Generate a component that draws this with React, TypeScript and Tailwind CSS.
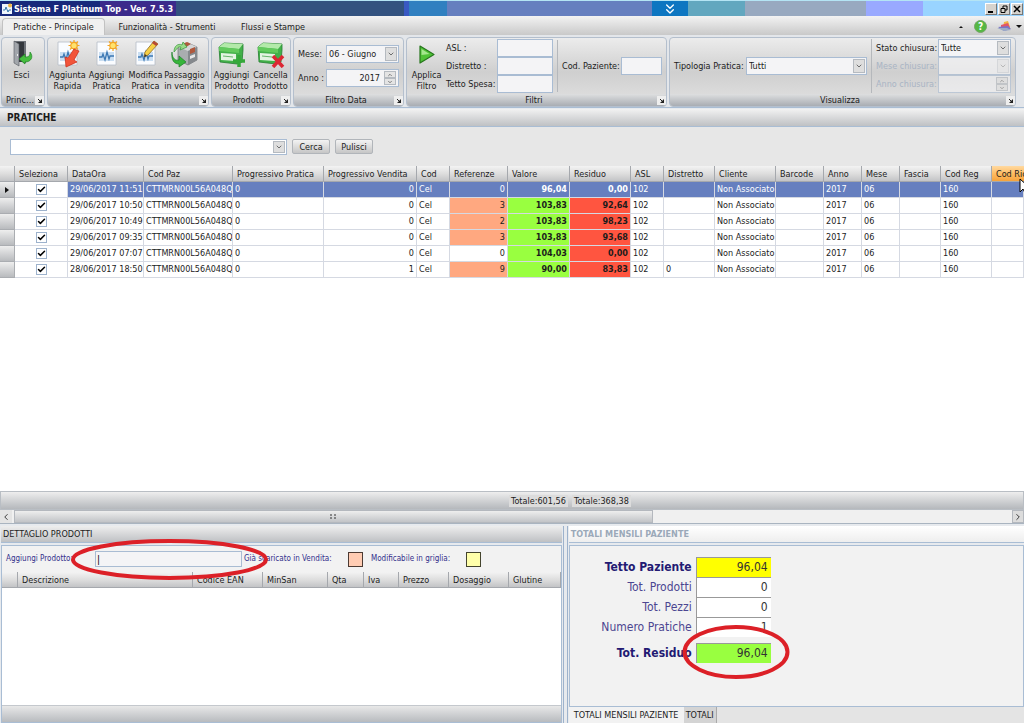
import type { ReactNode } from 'react'
import { ChevronDown, ChevronLeft, ChevronRight, ChevronUp, ChevronsDown, Check } from 'lucide-react'
import clsx from 'clsx'

interface Practice {
  date: string
  sales: string
  refs: string
  value: string
  residual: string
  district: string
}

const PRACTICES: Practice[] = [
  { date: '29/06/2017 11:51', sales: '0', refs: '0', value: '96,04', residual: '0,00', district: '' },
  { date: '29/06/2017 10:50', sales: '0', refs: '3', value: '103,83', residual: '92,64', district: '' },
  { date: '29/06/2017 10:49', sales: '0', refs: '2', value: '103,83', residual: '98,23', district: '' },
  { date: '29/06/2017 09:35', sales: '0', refs: '3', value: '103,83', residual: '93,68', district: '' },
  { date: '29/06/2017 07:07', sales: '0', refs: '0', value: '104,03', residual: '0,00', district: '' },
  { date: '28/06/2017 18:50', sales: '1', refs: '9', value: '90,00', residual: '83,83', district: '0' },
]

const COLUMNS = [
  { title: '', width: 'w-[15px]' },
  { title: 'Seleziona', width: 'w-[53px]' },
  { title: 'DataOra', width: 'w-[76px]' },
  { title: 'Cod Paz', width: 'w-[89px]' },
  { title: 'Progressivo Pratica', width: 'w-[91px]' },
  { title: 'Progressivo Vendita', width: 'w-[93px]' },
  { title: 'Cod', width: 'w-[33px]' },
  { title: 'Referenze', width: 'w-[58px]' },
  { title: 'Valore', width: 'w-[62px]' },
  { title: 'Residuo', width: 'w-[61px]' },
  { title: 'ASL', width: 'w-[33px]' },
  { title: 'Distretto', width: 'w-[51px]' },
  { title: 'Cliente', width: 'w-[61px]' },
  { title: 'Barcode', width: 'w-[48px]' },
  { title: 'Anno', width: 'w-[38px]' },
  { title: 'Mese', width: 'w-[38px]' },
  { title: 'Fascia', width: 'w-[41px]' },
  { title: 'Cod Reg', width: 'w-[51px]' },
  { title: 'Cod Ric', width: 'w-auto' },
]

const PRODUCT_COLUMNS = [
  { title: '', width: 'w-[16px]' },
  { title: 'Descrizione', width: 'w-[175px]' },
  { title: 'Codice EAN', width: 'w-[70px]' },
  { title: 'MinSan', width: 'w-[65px]' },
  { title: 'Qta', width: 'w-[36px]' },
  { title: 'Iva', width: 'w-[35px]' },
  { title: 'Prezzo', width: 'w-[50px]' },
  { title: 'Dosaggio', width: 'w-[60px]' },
  { title: 'Glutine', width: 'w-auto' },
]

const TOTALS = [
  { label: 'Tetto Paziente', value: '96,04', strong: true, color: 'bg-[#ffff00]' },
  { label: 'Tot. Prodotti', value: '0', strong: false, color: 'bg-white' },
  { label: 'Tot. Pezzi', value: '0', strong: false, color: 'bg-white' },
  { label: 'Numero Pratiche', value: '1', strong: false, color: 'bg-white' },
]

const FIELD = 'border border-[#a9bcd3] bg-[#f4f4f6] outline-none'
const HEADER_CELL =
  'h-4 overflow-hidden border-r border-b border-[#a5a8ad] bg-linear-to-b from-[#f3f3f3] via-[#dedede] to-[#c3c4c6] pr-0 pl-1 text-left font-normal whitespace-nowrap'

function DoorIcon() {
  return (
    <svg viewBox="0 0 26 28" className="h-7 w-[26px]" aria-hidden="true">
      <path d="M5 1h12v22h-3V3H7v20H5z" fill="#6d7177" />
      <path d="M7 2h8v20H7z" fill="#33373c" />
      <path d="M5 1l5 3v22l-5-3z" fill="#a2a6ab" stroke="#55595e" strokeWidth=".6" />
      <path d="M8.500 14v2" stroke="#eee" />
      <path d="M10 19l6-5v3c4 0 5-1 5-5 4 5 1 10-5 10v2z" fill="#45bd3e" stroke="#218326" strokeWidth=".7" />
    </svg>
  )
}

type SheetMark = 'quick' | 'new' | 'edit'

function SheetIcon({ mark }: { mark: SheetMark }) {
  return (
    <svg viewBox="0 0 26 28" className="h-7 w-[26px]" aria-hidden="true">
      <path d="M3 2h19v23H3z" fill="#fafcff" stroke="#b5bcc6" strokeWidth=".8" />
      <path d="M5 12h15v9H5z" fill="#c9def2" />
      <path d="M5 17h3l1-3 2 6 2-8 2 7 1-3h4" fill="none" stroke="#3c78b4" strokeWidth="1.3" />
      {mark !== 'edit' && (
        <g stroke="#f3a526" strokeWidth="1.2">
          <path d="M19 0v11M13.500 5.500h11M15 1.500l8 8M23 1.500l-8 8" />
          <circle cx="19" cy="5.500" r="3.200" fill="#ffe36c" />
        </g>
      )}
      {mark === 'quick' && (
        <path d="M19 9l5 2-5 9 3 2-11 5-1-10 3 1z" fill="#f2543a" stroke="#c92d18" strokeWidth=".7" />
      )}
      {mark === 'edit' && (
        <g>
          <path d="M21 1l4 3-10 11-4 2 1-5z" fill="#f6cf45" stroke="#8a6a24" strokeWidth=".8" />
          <path d="M21 1l4 3-2 2-4-3z" fill="#b64836" />
          <path d="M11 17l1-3 2 2z" fill="#333" />
        </g>
      )}
    </svg>
  )
}

function SaleIcon() {
  return (
    <svg viewBox="0 0 28 28" className="h-7 w-7" aria-hidden="true">
      <path d="M7 7l10-4 9 4v13l-9 5-10-5z" fill="#a9adb0" stroke="#6d7174" strokeWidth=".7" />
      <path d="M7 7l10 4 9-4-9-4z" fill="#d5d7d8" />
      <path d="M17 11v14l9-5V7z" fill="#85898d" />
      <path d="M11 4l5-2 4 2-5 3zM19 9l5-2v5l-5 2z" fill="#b0593d" />
      <path d="M19 16l5-2v3l-5 2z" fill="#e8e8e8" />
      <path d="M3 12C3 6 7 3 11 5l1-3 4 5-7 3 1-3c-3-1-4 2-7 5z" fill="#9bdc8a" stroke="#37963b" strokeWidth=".7" />
      <path d="M1 12c0 7 4 9 7 8v-4l7 6-7 5v-3c-5 0-8-4-7-12z" fill="#36b53a" stroke="#1d7d28" strokeWidth=".7" />
    </svg>
  )
}

function BoxIcon({ remove }: { remove?: boolean }) {
  return (
    <svg viewBox="0 0 28 28" className="h-7 w-7" aria-hidden="true">
      <path d="M1 7l5-4 19 1v6l-1 12-5 2-17-2z" fill="#43b04a" stroke="#257e30" strokeWidth=".8" />
      <path d="M1 7l5-4 19 1-4 5z" fill="#b3eaa9" />
      <path d="M1 7l20 2v4L1 11z" fill="#62ca5c" />
      <path d="M3 13l15 1v7L3 20z" fill="#e4f4e3" />
      <path d="M5 16l10 1" stroke="#68b56c" />
      {remove ? (
        <path d="M16 16l10 11M26 16L16 27" stroke="#dc2733" strokeWidth="3.500" />
      ) : (
        <path d="M21 15v12M15 21h12" stroke="#35a83a" strokeWidth="3.500" />
      )}
    </svg>
  )
}

function PlayIcon() {
  return (
    <svg viewBox="0 0 26 28" className="h-7 w-[26px]" aria-hidden="true">
      <path d="M6 6l14 8.500L6 23z" fill="#4fc236" stroke="#27761d" strokeWidth="1.200" strokeLinejoin="round" />
      <path d="M7.500 9l8 5-8 1z" fill="#a4e68d" />
    </svg>
  )
}

interface RibbonButtonProps {
  icon: ReactNode
  lines: string[]
}

function RibbonButton({ icon, lines }: RibbonButtonProps) {
  return (
    <button type="button" className="flex w-[39px] shrink-0 flex-col items-center pt-0.5 text-center leading-[11px] whitespace-nowrap">
      <span className="pb-0.5">{icon}</span>
      {lines.map((line) => (
        <span key={line}>{line}</span>
      ))}
    </button>
  )
}

function RibbonGroup({ title, className, children }: { title: string; className?: string; children: ReactNode }) {
  return (
    <section
      className={clsx(
        'flex h-[70px] flex-col overflow-hidden rounded-sm border border-[#b4bfcd] bg-linear-to-b from-[#ececec] via-[#cfcfcf] to-[#e2e2e2]',
        className,
      )}
    >
      <div className="flex h-14 items-stretch">{children}</div>
      <div className="flex h-3 items-center bg-linear-to-b from-[#dedfe0] to-[#a9adb3] pl-1">
        <h2 className="flex-1 truncate text-center leading-3">{title}</h2>
        <button type="button" aria-label={`Opzioni ${title}`} className="grid size-[9px] place-items-center bg-[#eeeeee]">
          <svg viewBox="0 0 7 7" className="size-[7px]" aria-hidden="true">
            <path d="M2 2l2 2" stroke="#222" />
            <path d="M6 2v4H2z" fill="#222" />
          </svg>
        </button>
      </div>
    </section>
  )
}

interface ComboProps {
  id: string
  value: string
  className: string
  disabled?: boolean
  label?: string
}

function Combo({ id, value, className, disabled, label }: ComboProps) {
  return (
    <div className={clsx('relative', className)}>
      <select
        id={id}
        aria-label={label}
        disabled={disabled}
        className={clsx(FIELD, 'h-full w-full appearance-none pl-0.5', disabled && 'opacity-70')}
      >
        <option>{value}</option>
      </select>
      <span
        className={clsx(
          'pointer-events-none absolute inset-y-0.5 right-0.5 grid w-3 place-items-center border border-[#b5bac0] bg-[#dedede] text-[#333]',
          disabled && 'opacity-40',
        )}
      >
        <ChevronDown className="size-2" />
      </span>
    </div>
  )
}

function Spinner({ id, value, className, disabled }: ComboProps) {
  return (
    <div className={clsx(FIELD, 'flex items-center pr-0.5', className, disabled && 'opacity-60')}>
      <input
        id={id}
        type="text"
        defaultValue={value}
        disabled={disabled}
        className="h-full w-full min-w-0 bg-transparent pr-1 text-right outline-none"
      />
      <div className="flex w-3 shrink-0 flex-col">
        <button type="button" aria-label="Aumenta" disabled={disabled} className="grid h-[7px] place-items-center border border-[#b5bac0] bg-[#e4e4e4]">
          <ChevronUp className="size-[6px]" />
        </button>
        <button type="button" aria-label="Diminuisci" disabled={disabled} className="grid h-[7px] place-items-center border border-[#b5bac0] bg-[#e4e4e4]">
          <ChevronDown className="size-[6px]" />
        </button>
      </div>
    </div>
  )
}

const WINDOW_BUTTON = 'grid h-3 w-3 place-items-center border border-[#777] border-t-white border-l-white bg-[#d6d3ce]'

function TitleBar() {
  return (
    <header className="flex h-4 border-t border-[#b4e4f4]">
      <div className="flex w-[176px] items-center gap-0.5 bg-linear-to-r from-[#17297b] from-57% to-[#3b2a8b] to-57% pl-0.5">
        <svg viewBox="0 0 10 12" className="h-3 w-2.5" aria-hidden="true">
          <path d="M0 1h10v10H0z" fill="#eef5fb" />
          <path d="M1 7h2l1-3 2 5 1-2h2" fill="none" stroke="#3678ac" />
          <circle cx="8" cy="2.500" r="2" fill="#efb947" />
        </svg>
        <h1 className="leading-4 font-bold whitespace-nowrap text-white">Sistema F Platinum Top - Ver. 7.5.3</h1>
      </div>
      <div className="w-[228px] bg-[#33527f]" />
      <div className="w-[5px] bg-[#3959c3]" />
      <div className="w-[38px] bg-[#3080c0]" />
      <div className="flex-1 bg-[#667fbf]" />
      <button type="button" aria-label="Mostra barra" className="grid w-9 place-items-center bg-[#0d76c1] text-white">
        <ChevronsDown className="size-4" />
      </button>
      <div className="w-[57px] bg-[#62a7bf]" />
      <div className="w-[121px] bg-[#98a9c0]" />
      <div className="w-[57px] bg-[#99a9ff]" />
      <div className="flex w-[101px] items-center justify-end gap-px bg-[#99d4ff] pr-px">
        <button type="button" aria-label="Riduci" className={WINDOW_BUTTON}>
          <svg viewBox="0 0 8 8" className="size-2" aria-hidden="true">
            <path d="M1 7h5" stroke="#000" strokeWidth="2" />
          </svg>
        </button>
        <button type="button" aria-label="Ripristina" className={WINDOW_BUTTON}>
          <svg viewBox="0 0 8 8" className="size-2" aria-hidden="true">
            <path d="M3 3V1h4v4H5M1 3.500h4v4H1z" fill="none" stroke="#000" />
          </svg>
        </button>
        <button type="button" aria-label="Chiudi" className={WINDOW_BUTTON}>
          <svg viewBox="0 0 8 8" className="size-2" aria-hidden="true">
            <path d="M1 1l6 6M7 1L1 7" stroke="#000" strokeWidth="1.500" />
          </svg>
        </button>
      </div>
    </header>
  )
}

function RibbonTabs() {
  return (
    <nav className="flex h-[19px] items-end bg-linear-to-b from-[#f3f3f3] to-[#c9c9c9] pl-0.5">
      <button type="button" className="h-[17px] w-[103px] rounded-t-sm border border-b-0 border-[#c2c2c2] bg-[#f0f0f0]">
        Pratiche - Principale
      </button>
      <button type="button" className="h-[17px] w-[124px]">Funzionalità - Strumenti</button>
      <button type="button" className="h-[17px] w-[88px]">Flussi e Stampe</button>
      <div className="ml-auto flex h-[17px] items-center gap-2.5 pr-0.5">
        <button type="button" aria-label="Riduci barra multifunzione">
          <svg viewBox="0 0 6 4" className="h-1 w-1.5" aria-hidden="true">
            <path d="M1 3l2-2 2 2z" fill="#111" />
          </svg>
        </button>
        <button type="button" aria-label="Guida" className="grid size-[13px] place-items-center rounded-full border border-[#75a568] bg-[#55b843] text-[10px] leading-3 font-bold text-white">
          ?
        </button>
        <button type="button" aria-label="Stile" className="flex items-center gap-1">
          <svg viewBox="0 0 15 11" className="h-[11px] w-[15px]" aria-hidden="true">
            <path d="M7 1l4-1 2 6-7 1z" fill="#f2b343" />
            <path d="M4 4l7-2 2 5H4z" fill="#e25568" />
            <path d="M1 6l10-1 3 3-7 2z" fill="#7a74c6" />
            <path d="M0 7l10 0 4 2-7 1z" fill="#9babc6" />
          </svg>
          <svg viewBox="0 0 6 4" className="h-1 w-1.5" aria-hidden="true">
            <path d="M0 0h6L3 3z" fill="#111" />
          </svg>
        </button>
      </div>
    </nav>
  )
}

function Ribbon() {
  return (
    <div className="flex h-[73px] items-start gap-0.5 border-b border-[#a9bdd4] bg-[#e3e6ea] pt-0.5 pr-2 pl-px">
      <RibbonGroup title="Princi..." className="w-11">
        <RibbonButton icon={<DoorIcon />} lines={['Esci']} />
      </RibbonGroup>
      <RibbonGroup title="Pratiche" className="w-[162px]">
        <RibbonButton icon={<SheetIcon mark="quick" />} lines={['Aggiunta', 'Rapida']} />
        <RibbonButton icon={<SheetIcon mark="new" />} lines={['Aggiungi', 'Pratica']} />
        <RibbonButton icon={<SheetIcon mark="edit" />} lines={['Modifica', 'Pratica']} />
        <RibbonButton icon={<SaleIcon />} lines={['Passaggio', 'in vendita']} />
      </RibbonGroup>
      <RibbonGroup title="Prodotti" className="w-20">
        <RibbonButton icon={<BoxIcon />} lines={['Aggiungi', 'Prodotto']} />
        <RibbonButton icon={<BoxIcon remove />} lines={['Cancella', 'Prodotto']} />
      </RibbonGroup>
      <RibbonGroup title="Filtro Data" className="w-[111px]">
        <div className="grid flex-1 grid-cols-[28px_1fr] content-center items-center gap-y-1.5 px-1">
          <label htmlFor="mese">Mese:</label>
          <Combo id="mese" value="06 - Giugno" className="h-[18px]" />
          <label htmlFor="anno">Anno :</label>
          <Spinner id="anno" value="2017" className="h-[18px]" />
        </div>
      </RibbonGroup>
      <RibbonGroup title="Filtri" className="w-[261px]">
        <RibbonButton icon={<PlayIcon />} lines={['Applica', 'Filtro']} />
        <div className="grid grid-cols-[51px_56px] content-center items-center">
          <label htmlFor="asl">ASL :</label>
          <input id="asl" type="text" className={clsx(FIELD, 'h-[18px] w-full')} />
          <label htmlFor="distretto">Distretto :</label>
          <input id="distretto" type="text" className={clsx(FIELD, 'h-[18px] w-full')} />
          <label htmlFor="tetto" className="whitespace-nowrap">Tetto Spesa:</label>
          <input id="tetto" type="text" className={clsx(FIELD, 'h-[18px] w-full')} />
        </div>
        <div className="my-0.5 ml-1 flex flex-1 items-center justify-between border-l border-[#b5b8bc] pr-1 pl-1">
          <label htmlFor="codpaz" className="whitespace-nowrap">Cod. Paziente:</label>
          <input id="codpaz" type="text" className={clsx(FIELD, 'h-[18px] w-[41px]')} />
        </div>
      </RibbonGroup>
      <RibbonGroup title="Visualizza" className="min-w-0 flex-1">
        <div className="flex flex-1 items-center gap-1 pr-1 pl-1">
          <label htmlFor="tipologia" className="w-[68px] whitespace-nowrap">Tipologia Pratica:</label>
          <Combo id="tipologia" value="Tutti" className="h-[18px] flex-1" />
        </div>
        <div className="my-px grid grid-cols-[62px_73px] content-center items-center border-l border-[#b5b8bc] pr-1 pl-1">
          <label htmlFor="stato" className="whitespace-nowrap">Stato chiusura:</label>
          <Combo id="stato" value="Tutte" className="h-[18px]" />
          <label htmlFor="mesechiusura" className="whitespace-nowrap text-[#a9b4c4]">Mese chiusura:</label>
          <Combo id="mesechiusura" value="" disabled className="h-[18px]" />
          <label htmlFor="annochiusura" className="whitespace-nowrap text-[#a9b4c4]">Anno chiusura:</label>
          <Spinner id="annochiusura" value="" disabled className="h-[18px]" />
        </div>
      </RibbonGroup>
    </div>
  )
}

function SearchBar() {
  const button =
    'h-[15px] w-[38px] rounded-xs border border-[#b1b5ba] bg-linear-to-b from-[#f3f3f3] to-[#c6c6c6] leading-3'

  return (
    <form className="flex h-[39px] items-center gap-[5px] bg-[#e7e7e7] pl-2.5">
      <div className="relative h-4 w-[277px]">
        <select id="ricerca" aria-label="Ricerca pratiche" className="h-full w-full appearance-none border border-[#a9bcd3] bg-white">
          <option value="" />
        </select>
        <span className="pointer-events-none absolute inset-y-0.5 right-0.5 grid w-3 place-items-center border border-[#b5bac0] bg-[#dedede] text-[#333]">
          <ChevronDown className="size-2" />
        </span>
      </div>
      <button type="button" className={button}>Cerca</button>
      <button type="button" className={button}>Pulisci</button>
    </form>
  )
}

function PracticeRow({ row, selected }: { row: Practice; selected: boolean }) {
  const cell = clsx(
    'h-4 overflow-hidden border-r border-b border-[#d5d9e2] py-0 pr-0 pl-0.5 leading-[15px] whitespace-nowrap',
    selected && 'bg-[#667fbf] text-white',
  )
  const numeric = clsx(
    'h-4 overflow-hidden border-r border-b border-[#d5d9e2] py-0 pr-0.5 pl-0 text-right leading-[15px] whitespace-nowrap',
    selected && 'bg-[#667fbf] text-white',
  )

  return (
    <tr>
      <td className="h-4 border border-t-0 border-l-0 border-[#aaadb1] bg-linear-to-b from-[#eeeeee] to-[#b9bbbe] p-0">
        {selected && (
          <svg viewBox="0 0 4 6" className="mx-auto h-1.5 w-1" aria-hidden="true">
            <path d="M0 0l4 3-4 3z" fill="#111" />
          </svg>
        )}
      </td>
      <td className="h-4 border-r border-b border-[#d5d9e2] p-0">
        <label className="relative mx-auto block size-[11px]">
          <input
            type="checkbox"
            defaultChecked
            aria-label={`Seleziona ${row.date}`}
            className="peer block size-[11px] appearance-none border border-[#9db2cc] bg-white"
          />
          <Check className="pointer-events-none absolute inset-0 hidden size-[11px] p-px text-black peer-checked:block" strokeWidth={4} />
        </label>
      </td>
      <td className={cell}>{row.date}</td>
      <td className={cell}>CTTMRN00L56A048Q</td>
      <td className={cell}>0</td>
      <td className={numeric}>{row.sales}</td>
      <td className={cell}>Cel</td>
      <td className={clsx(numeric, !selected && row.refs !== '0' && 'bg-[#ffa880]')}>{row.refs}</td>
      <td className={clsx(numeric, 'font-bold', !selected && 'bg-[#99ff40]')}>{row.value}</td>
      <td className={clsx(numeric, 'font-bold', !selected && 'bg-[#ff5540]')}>{row.residual}</td>
      <td className={cell}>102</td>
      <td className={cell}>{row.district}</td>
      <td className={cell}>Non Associato</td>
      <td className={cell} />
      <td className={cell}>2017</td>
      <td className={cell}>06</td>
      <td className={cell} />
      <td className={cell}>160</td>
      <td className={cell} />
    </tr>
  )
}

function PracticeGrid() {
  return (
    <div className="relative flex-1 overflow-hidden bg-white">
      <table className="w-full table-fixed border-separate border-spacing-0">
        <thead>
          <tr>
            {COLUMNS.map((column) => (
              <th
                key={column.title}
                className={clsx(
                  HEADER_CELL,
                  column.width,
                  column.title === 'Cod Ric' && 'border-r-0 from-[#ffd9a0] via-[#ffbd62] to-[#f5a33c]',
                )}
              >
                {column.title}
              </th>
            ))}
          </tr>
        </thead>
        <tbody>
          {PRACTICES.map((row, index) => (
            <PracticeRow key={row.date} row={row} selected={index === 0} />
          ))}
        </tbody>
      </table>
      <svg viewBox="0 0 12 18" className="absolute top-3 -right-[7px] h-[18px] w-3" aria-hidden="true">
        <path d="M1 1v13l3-3 3 6 2-1-3-6h5z" fill="#fff" stroke="#000" />
      </svg>
    </div>
  )
}

function GridFooter() {
  return (
    <div>
      <div className="flex h-[19px] items-center gap-1 border border-[#b9bec4] bg-linear-to-b from-[#eeeeee] to-[#b5b8bc] pl-[508px]">
        <output className="w-[59px] bg-[#dcdcdc] px-0.5 leading-3 whitespace-nowrap">Totale:601,56</output>
        <output className="w-[59px] bg-[#dcdcdc] px-0.5 leading-3 whitespace-nowrap">Totale:368,38</output>
      </div>
      <div className="flex h-[14px] border-b border-[#a9b4c0] bg-[#f0f0f0]">
        <button type="button" aria-label="Scorri a sinistra" className="grid w-3 place-items-center bg-[#e4e4e4]">
          <ChevronLeft className="size-2.5" />
        </button>
        <div className="flex flex-1 pl-0.5">
          <div className="flex w-[64%] items-center justify-center border border-[#b4b8be] bg-linear-to-b from-[#eeeeee] to-[#c2c4c7]">
            <svg viewBox="0 0 6 5" className="h-[5px] w-1.5" aria-hidden="true">
              <path d="M0 1h2M4 1h2M0 4h2M4 4h2" stroke="#333" />
            </svg>
          </div>
        </div>
        <button type="button" aria-label="Scorri a destra" className="grid w-3 place-items-center border border-[#b4b8be] bg-[#dcdcdc]">
          <ChevronRight className="size-2.5" />
        </button>
      </div>
    </div>
  )
}

function ProductPanel() {
  return (
    <section className="relative flex w-[55%] flex-col border-r border-[#9db2cc] pr-px">
      <h2 className="h-[17px] border-b border-[#a9bdd4] bg-linear-to-b from-[#eeeeee] to-[#bfc1c4] pl-0.5 leading-4">
        DETTAGLIO PRODOTTI
      </h2>
      <div className="mt-0.5 flex flex-1 flex-col border border-[#a9bdd4] bg-white">
        <form className="flex h-[26px] items-center bg-[#f2f2f2] pl-1 text-[8px] text-[#33308c]">
          <label htmlFor="prodotto" className="w-[89px]">Aggiungi Prodotto:</label>
          <input id="prodotto" type="text" defaultValue="|" className={clsx(FIELD, 'h-4 w-[147px] px-px text-[10px] text-black')} />
          <span className="w-[106px] pl-0.5 whitespace-nowrap">Già scaricato in Vendita:</span>
          <span className="size-[15px] border border-[#4c3a32] bg-[#ffccb3]" />
          <span className="w-[103px] pl-2 whitespace-nowrap">Modificabile in griglia:</span>
          <span className="size-[15px] border border-[#44442e] bg-[#ffffaa]" />
        </form>
        <table className="w-full table-fixed border-separate border-spacing-0">
          <thead>
            <tr>
              {PRODUCT_COLUMNS.map((column) => (
                <th key={column.title} className={clsx(HEADER_CELL, column.width)}>
                  {column.title}
                </th>
              ))}
            </tr>
          </thead>
        </table>
        <div className="flex-1" />
        <div className="h-[17px] border-t border-[#c4c8cd] bg-linear-to-b from-[#e8e8e8] to-[#b8bbbf]" />
      </div>
      <svg viewBox="0 0 200 44" className="pointer-events-none absolute top-3 left-[69px] h-11 w-[200px]" aria-hidden="true">
        <ellipse cx="99.500" cy="21.500" rx="96.500" ry="18.500" fill="none" stroke="#dc2027" strokeWidth="4" />
      </svg>
    </section>
  )
}

function TotalsPanel() {
  const box = 'h-5 w-[75px] border-t border-l border-[#999] pr-[3px] text-right leading-[19px] text-[#333]'

  return (
    <section className="flex flex-1 flex-col border-l border-[#9db2cc] pl-px">
      <h2 className="h-[17px] border-b border-[#a9bdd4] bg-linear-to-b from-white to-[#eeeeee] pl-0.5 leading-4 font-bold text-[#9ba9b9]">
        TOTALI MENSILI PAZIENTE
      </h2>
      <div className="mt-0.5 flex-1 border border-[#a9bdd4] bg-[#f2f2f2] pt-[11px] text-[12px]">
        <div className="relative w-[201px]">
          {TOTALS.map((total) => (
            <div key={total.label} className="flex h-5 items-center justify-end gap-1">
              <span className={total.strong ? 'font-bold text-[#231a73]' : 'text-[#4c4691]'}>{total.label}</span>
              <output className={clsx(box, total.color)}>{total.value}</output>
            </div>
          ))}
          <div className="mt-1.5 flex h-5 items-center justify-end gap-1">
            <span className="font-bold text-[#231a73]">Tot. Residuo</span>
            <output className={clsx(box, 'bg-[#99ff40]')}>96,04</output>
          </div>
          <svg viewBox="0 0 108 56" className="pointer-events-none absolute -right-[19px] -bottom-[17px] h-14 w-[108px]" aria-hidden="true">
            <ellipse cx="54" cy="28" rx="51.500" ry="25" fill="none" stroke="#dc2027" strokeWidth="4" />
          </svg>
        </div>
      </div>
      <div className="flex h-4 items-stretch bg-[#e4e4e4]">
        <button type="button" className="w-[115px] bg-[#f2f2f2] whitespace-nowrap">TOTALI MENSILI PAZIENTE</button>
        <button type="button" className="w-[33px] border-r border-[#aaa] bg-[#d4d4d4]">TOTALI</button>
      </div>
    </section>
  )
}

export default function App() {
  return (
    <div className="flex min-h-screen flex-col bg-[#e7eaee] font-['DejaVu_Sans_Condensed','DejaVu_Sans',sans-serif] text-[9px] leading-3 text-[#1c1c1c]">
      <TitleBar />
      <RibbonTabs />
      <Ribbon />
      <h2 className="mt-px h-[18px] border-b border-[#a9bdd4] bg-linear-to-b from-[#f2f2f2] to-[#bfc1c4] pl-[7px] text-[10px] leading-[18px] font-bold">
        PRATICHE
      </h2>
      <SearchBar />
      <PracticeGrid />
      <GridFooter />
      <div className="mt-0.5 flex h-[197px] gap-[3px] pl-px">
        <ProductPanel />
        <TotalsPanel />
      </div>
    </div>
  )
}
